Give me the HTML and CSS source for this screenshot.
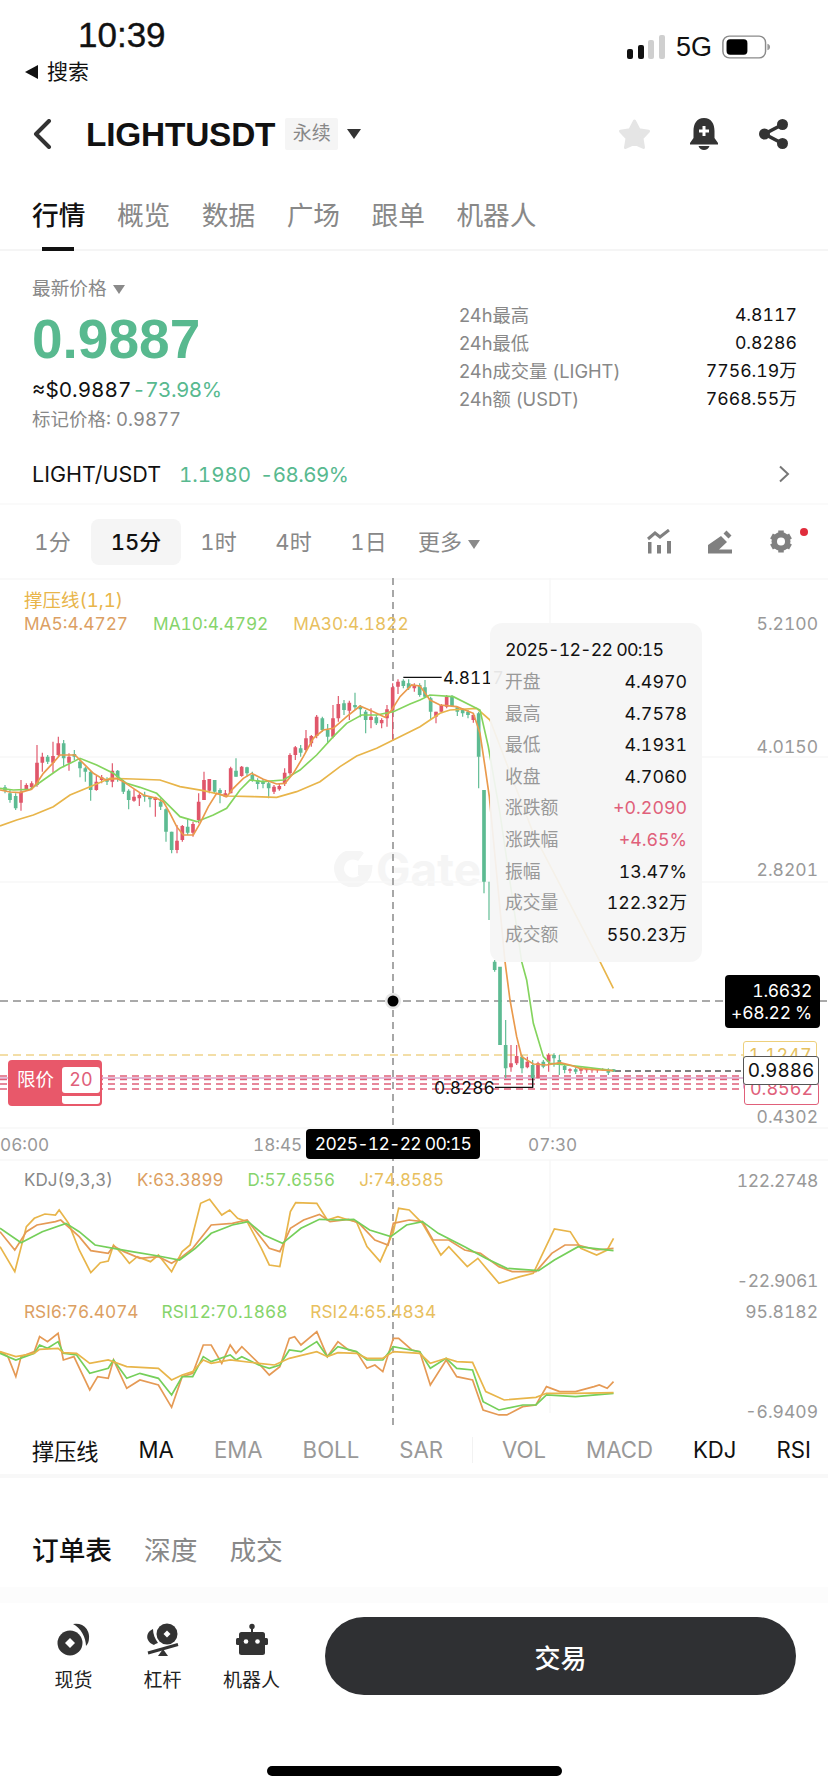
FILE: index.html
```html
<!DOCTYPE html>
<html lang="zh">
<head>
<meta charset="utf-8">
<title>LIGHTUSDT</title>
<link rel="stylesheet" href="styles.css">
</head>
<body>
<div class="app">
  <header class="status">
    <div class="status-left">
      <div class="clock">10:39</div>
      <div class="back-app"><i class="tri-left"></i>搜索</div>
    </div>
    <div class="status-right">
      <svg class="signal" viewBox="0 0 38 25"><rect x="0" y="14" width="6" height="10" rx="2" fill="#111"/><rect x="11" y="10" width="6" height="14" rx="2" fill="#111"/><rect x="21" y="5" width="6" height="19" rx="2" fill="#cfcfcf"/><rect x="32" y="0" width="6" height="24" rx="2" fill="#cfcfcf"/></svg>
      <span class="net">5G</span>
      <svg class="battery" viewBox="0 0 54 26"><rect x="1" y="1" width="47" height="24" rx="7" fill="none" stroke="#8a8a8a" stroke-width="1.6"/><rect x="5" y="4.5" width="23" height="17" rx="4" fill="#000"/><path d="M50 9.5c2 .5 3 2 3 3.5s-1 3-3 3.5z" fill="#9a9a9a"/></svg>
    </div>
  </header>

  <nav class="nav">
    <svg class="chev-back" viewBox="0 0 20 30"><path d="M17 2 4 15l13 13" fill="none" stroke="#333" stroke-width="4" stroke-linecap="round" stroke-linejoin="round"/></svg>
    <h1 class="symbol">LIGHTUSDT</h1>
    <span class="badge">永续</span>
    <i class="tri-down tri-dark"></i>
    <div class="nav-icons">
      <svg class="ic-star" viewBox="0 0 33 32"><polygon points="16.5 3 21 11.8 30.5 13.2 24 20.3 25.5 29.5 16.5 25.3 7.5 29.5 9 20.3 2.5 13.2 12 11.8" fill="#e5e5e5" stroke="#e5e5e5" stroke-width="3" stroke-linejoin="round"/></svg>
      <svg class="ic-bell" viewBox="0 0 28 32"><path d="M14 0C6.500 0 3.500 6 3.500 13v7L0 25v1.500h28V25l-3.500-5v-7C24.500 6 21.500 0 14 0z" fill="#333"/><path d="M8.500 28h11c-.8 2.600-3 4-5.500 4s-4.700-1.400-5.500-4z" fill="#333"/><path d="M12.500 8h3v3.500H19v3h-3.500V18h-3v-3.500H9v-3h3.500z" fill="#fff"/></svg>
      <svg class="ic-share" viewBox="0 0 29 30"><path d="M23.500 5.500 5.500 15l18 9.500" fill="none" stroke="#333" stroke-width="3.500"/><circle cx="23.500" cy="5.500" r="5.500" fill="#333"/><circle cx="5.500" cy="15" r="5.500" fill="#333"/><circle cx="23.500" cy="24.500" r="5.500" fill="#333"/></svg>
    </div>
  </nav>

  <div class="tabs">
    <span class="tab tab-on">行情</span><span class="tab">概览</span><span class="tab">数据</span><span class="tab">广场</span><span class="tab">跟单</span><span class="tab">机器人</span>
  </div>

  <section class="summary">
    <div class="sum-left">
      <div class="sum-label">最新价格<i class="tri-down tri-gray"></i></div>
      <div class="price">0.9887</div>
      <div class="sum-sub"><span>≈$0.9887</span><span class="up pct">-73.98%</span></div>
      <div class="sum-mark">标记价格: 0.9877</div>
    </div>
    <dl class="sum-right">
      <div class="sum-row"><dt>24h最高</dt><dd>4.8117</dd></div>
      <div class="sum-row"><dt>24h最低</dt><dd>0.8286</dd></div>
      <div class="sum-row"><dt>24h成交量 (LIGHT)</dt><dd>7756.19万</dd></div>
      <div class="sum-row"><dt>24h额 (USDT)</dt><dd>7668.55万</dd></div>
    </dl>
  </section>

  <div class="pair">
    <span class="pair-name">LIGHT/USDT</span><span class="up pair-last">1.1980</span><span class="up pct">-68.69%</span>
    <svg class="chev-right" viewBox="0 0 12 18"><path d="M2 1.500 10 9l-8 7.500" fill="none" stroke="#777" stroke-width="2"/></svg>
  </div>

  <div class="periods">
    <span class="period">1分</span><span class="period period-on">15分</span><span class="period">1时</span><span class="period">4时</span><span class="period">1日</span><span class="period period-more">更多<i class="tri-down tri-gray"></i></span>
    <div class="period-icons">
      <svg class="ic-tool" viewBox="0 0 24 25"><path d="M1 10 8 4l5 4 9-7" fill="none" stroke="#808080" stroke-width="3"/><path d="M1 13h3.500v11.500H1zM10 16h4v8.500h-4zM20 12h4v12.500h-4z" fill="#808080"/></svg>
      <svg class="ic-tool" viewBox="0 0 24 25"><path d="M13 7l6 6-9 8.500H0v-5.500zM15.500 4.500 18.500 1.500l5 5-3 3zM11 20.500h13v4H0v-4z" fill="#808080"/></svg>
      <div class="gear-wrap">
        <svg class="ic-tool" viewBox="0 0 24 24"><g stroke="#808080" stroke-width="5.500"><path d="M12 12V1M12 12v11M12 12 2.500 6.500M12 12l9.500 5.500M12 12l9.500-5.500M12 12l-9.500 5.500"/></g><circle cx="12" cy="12" r="9.500" fill="#808080"/><circle cx="12" cy="12" r="4" fill="#fff"/></svg>
        <i class="red-dot"></i>
      </div>
    </div>
  </div>

  <section class="chart">
    <div class="watermark">
      <svg class="wm-logo" viewBox="0 0 40 36"><path d="M28 6A14 14 0 1 0 34 19H25" fill="none" stroke="#f5f5f5" stroke-width="10"/></svg>
      <span>Gate</span>
    </div>

    <svg class="plot" viewBox="0 0 828 847">
      <g stroke="#f7f7f7" stroke-width="1.500" fill="none">
        <path d="M0 179H828M0 304H828M0 550H828M0 582H828M0 1H828M550 0V550M0 836H0M550 582V835"/>
      </g>
      <g fill="none">
        <path d="M393 0V847" stroke="#8a8a8a" stroke-width="1.500" stroke-dasharray="7 5"/>
        <path d="M0 423H828" stroke="#555" stroke-width="1" stroke-dasharray="8 5"/>
        <path d="M0 477H745" stroke="#f0d48a" stroke-width="1.300" stroke-dasharray="8 5"/>
        <path d="M0 500H745" stroke="#c77fb5" stroke-width="1"/>
        <path d="M0 498H745M0 501.500H745M0 506H745M0 511H745" stroke="#e0607a" stroke-width="1.500" stroke-dasharray="7 5"/>
        <path d="M615 493H745" stroke="#555" stroke-width="1.300" stroke-dasharray="6 4"/>
      </g>
      <g transform="translate(0 2) scale(.33333)" fill="none">
        <path stroke="#5dbb92" stroke-width="3.500" d="M15 615V640M30 630V668M47 640V690M143 525V552M191 480V562M223 510V540M240 535V592M256 560V605M272 572V662M321 592V615M353 570V605M370 600V642M386 628V688M434 635V665M450 648V682M482 655V690M498 685V785M515 755V820M563 715V765M644 600V640M660 625V670M708 535V590M741 560V590M757 575V605M773 595V628M789 598V625M806 605V655M902 495V530M967 410V455M983 432V490M1032 360V405M1065 338V390M1081 375V412M1097 390V460M1129 405V435M1210 298V325M1226 298V330M1259 310V350M1275 300V352M1292 350V418M1356 345V380M1372 380V408M1388 385V410M1404 390V415M1436 395V625M1452 630V940M1467 905V1020M1484 1140V1175M1517 1320V1495M1566 1425V1480M1598 1440V1520M1630 1440V1465M1662 1420V1460M1678 1425V1485M1694 1450V1480M1727 1462V1482M1825 1465V1485M1841 1468V1475"/>
        <path stroke="#5dbb92" stroke-width="11" d="M15 622V632M30 640V660M47 648V685M143 530V545M191 490V535M223 522V530M240 545V565M256 565V575M272 575V630M321 597V605M353 572V592M370 605V635M386 632V660M434 645V650M450 652V658M482 665V680M498 688V755M515 755V810M563 740V758M644 600V635M660 630V640M708 572V590M741 562V580M757 585V600M773 600V612M789 605V612M806 610V625M902 505V518M967 415V450M983 450V470M1032 370V390M1065 375V382M1081 380V388M1097 395V420M1129 412V430M1210 302V318M1226 310V325M1259 315V345M1275 322V350M1292 355V395M1356 350V378M1372 382V395M1388 390V400M1404 395V405M1436 400V530M1452 630V905M1484 1145V1170M1500 1160V1395M1517 1395V1465M1566 1430V1465M1598 1455V1495M1630 1445V1460M1662 1425V1435M1678 1440V1455M1694 1458V1470M1727 1468V1475M1825 1470V1478M1841 1468V1475"/>
        <path stroke="#e0566a" stroke-width="3.500" d="M63 600V692M79 610V632M95 604V625M111 495V620M127 518V575M159 485V578M175 470V530M207 520V572M289 588V632M305 585V610M337 550V622M402 628V665M418 640V678M466 650V710M531 735V820M547 735V785M579 725V770M596 640V730M612 575V660M628 597V640M676 630V652M692 560V640M725 558V590M822 615V642M838 610V632M854 565V618M870 520V585M886 498V540M918 450V515M934 465V500M950 405V475M999 375V475M1015 348V425M1048 362V420M1113 385V445M1145 415V445M1161 375V440M1178 310V480M1194 298V342M1243 310V335M1308 395V430M1324 372V398M1340 345V385M1420 400V428M1533 1395V1475M1550 1395V1455M1582 1430V1465M1614 1445V1495M1646 1420V1475M1710 1465V1480M1743 1458V1482M1760 1465V1478M1776 1465V1478M1792 1465V1478M1808 1465V1472"/>
        <path stroke="#e0566a" stroke-width="11" d="M63 635V668M79 615V628M95 610V622M111 548V615M127 530V548M159 528V548M175 490V525M207 530V548M289 605V630M305 592V600M337 572V605M402 650V662M418 645V655M466 652V660M531 782V810M547 738V780M579 732V758M596 665V720M612 600V660M628 597V632M676 640V650M692 565V640M725 560V588M822 620V635M838 618V628M854 578V612M870 525V580M886 502V525M918 475V510M934 468V490M950 410V468M999 415V470M1015 372V415M1048 368V392M1113 410V420M1145 420V430M1161 388V415M1178 322V390M1194 305V320M1243 315V325M1308 395V410M1324 375V395M1340 350V380M1420 405V420M1533 1450V1462M1550 1428V1450M1582 1445V1462M1614 1450V1495M1646 1425V1445M1710 1468V1472M1743 1465V1472M1760 1468V1471M1776 1468V1471M1792 1468V1471M1808 1468V1471"/>
        <polyline stroke="#e8b54a" stroke-width="5" points="0,738 50,720 100,705 160,680 210,645 270,620 330,595 400,597 480,600 540,620 610,632 680,648 760,650 830,652 890,635 960,605 1020,560 1070,528 1130,505 1180,480 1230,455 1260,440 1320,400 1350,390 1430,385 1470,420 1600,760 1800,1145 1840,1225"/>
        <polyline stroke="#84d45e" stroke-width="5" points="0,625 40,630 90,628 130,600 180,565 240,535 290,555 340,580 380,610 420,622 470,640 500,670 540,710 590,725 640,705 680,685 720,630 750,600 790,605 850,600 900,570 950,525 1000,470 1040,430 1085,405 1130,405 1180,395 1230,372 1260,360 1290,345 1360,350 1440,390 1465,500 1500,700 1565,1145 1580,1200 1600,1330 1630,1430 1650,1450 1700,1455 1760,1462 1840,1472"/>
        <polyline stroke="#ea9a4c" stroke-width="5" points="0,630 30,636 60,638 95,628 110,610 130,580 160,548 180,525 225,525 250,550 280,580 300,592 320,600 350,595 370,605 400,625 430,645 470,655 490,665 510,700 530,740 550,765 580,765 600,730 625,680 650,640 680,650 700,625 730,595 755,580 790,598 830,612 855,610 880,580 910,530 940,475 970,450 1000,445 1040,410 1080,378 1120,395 1155,412 1175,390 1200,350 1235,315 1260,318 1290,360 1320,375 1370,380 1420,400 1440,460 1455,560 1468,650 1515,1145 1530,1260 1550,1370 1565,1430 1600,1452 1640,1455 1680,1448 1710,1455 1740,1465 1800,1470 1840,1472"/>
        <path stroke="#111" stroke-width="4" d="M1210 292H1325M1598 1495V1522H1485"/>
      </g>
      <circle cx="393" cy="423" r="8" fill="#000" fill-opacity=".1"/>
      <circle cx="393" cy="423" r="5.500" fill="#000"/>
      <g transform="translate(0 582) scale(.528 .3333)" fill="none" stroke-width="1.700">
        <polyline vector-effect="non-scaling-stroke" stroke="#e8b54a" points="0,260 28,335 50,200 65,175 85,162 105,165 112,150 130,190 150,270 172,338 190,308 205,303 215,255 230,280 245,310 260,290 285,305 300,285 325,335 345,275 360,255 380,130 397,118 420,165 435,150 450,175 468,185 495,265 510,315 530,320 550,155 560,128 600,130 620,180 640,170 660,180 675,185 695,260 720,305 745,215 755,145 775,150 800,190 835,285 850,260 885,320 905,295 945,370 985,350 1010,340 1050,207 1080,215 1100,265 1130,285 1150,270 1162,235"/>
        <polyline vector-effect="non-scaling-stroke" stroke="#e59a55" points="0,215 28,270 50,215 70,195 105,185 115,180 150,230 172,272 205,280 215,258 235,275 265,295 300,290 325,310 345,290 365,265 400,195 440,190 468,180 510,265 530,275 550,205 575,180 605,163 625,185 660,178 680,190 710,240 735,255 745,190 775,180 800,185 820,240 850,240 880,270 910,280 945,320 970,335 1015,335 1045,280 1070,255 1095,255 1130,270 1162,265"/>
        <polyline vector-effect="non-scaling-stroke" stroke="#75cf5a" points="0,205 40,248 80,215 125,190 150,215 180,255 215,265 250,275 300,288 340,300 370,265 400,220 440,195 470,185 500,225 535,250 570,205 605,178 640,180 670,178 700,210 740,230 770,195 800,185 830,220 880,260 920,295 960,325 1020,332 1050,300 1095,260 1162,272"/>
        <polyline vector-effect="non-scaling-stroke" stroke="#e59a55" points="0,575 15,590 30,650 40,590 65,575 75,530 90,545 110,520 120,600 140,590 170,690 185,650 205,655 215,600 240,685 265,660 300,675 325,742 345,650 365,640 385,555 400,555 420,610 436,555 447,580 458,560 490,610 510,645 530,620 548,535 558,530 570,555 600,515 620,590 640,545 660,570 675,575 695,625 710,615 725,635 745,535 755,535 780,570 795,575 815,675 845,600 865,650 895,660 915,750 945,765 960,765 990,740 1015,735 1035,680 1060,695 1090,695 1125,680 1135,675 1150,685 1162,665"/>
        <polyline vector-effect="non-scaling-stroke" stroke="#75cf5a" points="0,580 30,600 65,580 75,555 90,565 110,545 120,580 145,585 170,640 205,625 215,600 240,655 265,640 300,655 325,705 345,650 365,650 385,590 400,605 436,585 447,600 458,590 490,615 510,625 530,615 548,570 570,575 600,545 620,590 640,560 675,575 695,600 725,600 745,560 795,575 815,625 845,595 865,625 895,630 915,725 945,750 990,735 1015,735 1035,705 1090,710 1162,700"/>
        <polyline vector-effect="non-scaling-stroke" stroke="#e8b54a" points="0,575 30,590 65,580 75,568 110,565 120,578 145,580 170,610 205,600 240,620 300,625 325,660 345,645 365,635 385,600 400,610 436,600 490,610 520,615 548,595 600,575 620,590 640,578 675,580 695,595 725,595 745,575 795,580 815,610 845,595 865,605 895,607 920,695 955,720 1015,712 1035,700 1090,700 1162,698"/>
      </g>
    </svg>

    <div class="legend legend-sr">撑压线(1,1)</div>
    <div class="legend legend-ma"><span class="c-o">MA5:4.4727</span><span class="c-g">MA10:4.4792</span><span class="c-y">MA30:4.1822</span></div>
    <div class="legend legend-kdj"><span class="c-n">KDJ(9,3,3)</span><span class="c-o">K:63.3899</span><span class="c-g">D:57.6556</span><span class="c-y">J:74.8585</span></div>
    <div class="legend legend-rsi"><span class="c-o">RSI6:76.4074</span><span class="c-g">RSI12:70.1868</span><span class="c-y">RSI24:65.4834</span></div>

    <span class="axis ax1">5.2100</span><span class="axis ax2">4.0150</span><span class="axis ax3">2.8201</span><span class="axis ax4">0.4302</span>
    <span class="axis ax5 axis-tight">122.2748</span><span class="axis ax6 axis-tight">-22.9061</span><span class="axis ax7">95.8182</span><span class="axis ax8">-6.9409</span>
    <span class="time t1">06:00</span><span class="time t2">18:45</span><span class="time t3">07:30</span>
    <span class="mark mark-hi">4.8117</span><span class="mark mark-lo">0.8286</span>

    <div class="tip">
      <div class="tip-date">2025-12-22 00:15</div>
      <div class="tip-row"><span>开盘</span><b>4.4970</b></div>
      <div class="tip-row"><span>最高</span><b>4.7578</b></div>
      <div class="tip-row"><span>最低</span><b>4.1931</b></div>
      <div class="tip-row"><span>收盘</span><b>4.7060</b></div>
      <div class="tip-row"><span>涨跌额</span><b class="red">+0.2090</b></div>
      <div class="tip-row"><span>涨跌幅</span><b class="red">+4.65%</b></div>
      <div class="tip-row"><span>振幅</span><b>13.47%</b></div>
      <div class="tip-row"><span>成交量</span><b>122.32万</b></div>
      <div class="tip-row"><span>成交额</span><b>550.23万</b></div>
    </div>

    <div class="cross-price"><span>1.6632</span><span>+68.22 %</span></div>
    <div class="cross-time">2025-12-22 00:15</div>

    <div class="tag tag-y">1.1247</div>
    <div class="tag tag-p">0.9010</div>
    <div class="tag tag-r">0.8562</div>
    <div class="tag tag-now">0.9886</div>

    <div class="limit">
      <span class="limit-name">限价</span>
      <span class="limit-qty">20</span>
      <span class="limit-under"></span>
    </div>
  </section>

  <div class="inds">
    <span class="ind">撑压线</span><span class="ind">MA</span><span class="ind off">EMA</span><span class="ind off">BOLL</span><span class="ind off">SAR</span><i class="ind-sep"></i><span class="ind off">VOL</span><span class="ind off">MACD</span><span class="ind">KDJ</span><span class="ind">RSI</span>
  </div>

  <div class="book-tabs">
    <span class="book-tab book-on">订单表</span><span class="book-tab">深度</span><span class="book-tab">成交</span>
  </div>

  <footer class="bottom">
    <div class="shortcut">
      <svg class="sc-icon" viewBox="0 0 34 34"><path d="M16 1a13 13 0 0 1 16 14c0 3-1 6-3 8 0-8-5-18-13-22z" fill="#333"/><circle cx="13" cy="20" r="12.500" fill="#333"/><path d="M13 15l5 5-5 5-5-5z" fill="#fff"/></svg>
      <span>现货</span>
    </div>
    <div class="shortcut">
      <svg class="sc-icon" viewBox="0 0 34 34"><circle cx="21" cy="11" r="10.500" fill="#333"/><path d="M21 7.500l3.500 3.500-3.500 3.500-3.500-3.500z" fill="#fff"/><path d="M7 6c-5 2-7 7-5 11 1 2 3 4 6 5 1-1 3-2 4-2-3-4-5-9-5-14z" fill="#333"/><path d="M2 30 32 21.500" stroke="#333" stroke-width="3"/><path d="M17 26l5 7H12z" fill="#333"/></svg>
      <span>杠杆</span>
    </div>
    <div class="shortcut">
      <svg class="sc-icon" viewBox="0 0 34 34"><circle cx="17" cy="3.500" r="2.700" fill="#333"/><rect x="16" y="5" width="2" height="5" fill="#333"/><rect x="4" y="9" width="26" height="23" rx="2.500" fill="#333"/><rect x="1" y="15" width="32" height="7" rx="1.500" fill="#333"/><circle cx="11" cy="18.500" r="2.300" fill="#fff"/><circle cx="22.500" cy="18.500" r="2.300" fill="#fff"/></svg>
      <span>机器人</span>
    </div>
    <button class="trade">交易</button>
  </footer>

  <div class="home"></div>
</div>
</body>
</html>
```

FILE: styles.css
```css
* { box-sizing: border-box; margin: 0; padding: 0; }
html, body { background: #fff; }
body {
  width: 828px;
  height: 1792px;
  overflow: hidden;
  color: #111;
  font-family: Inter, "Noto Sans CJK SC", sans-serif;
  font-variant-numeric: tabular-nums;
}
.app { width: 828px; height: 1792px; display: flex; flex-direction: column; }
i { display: inline-block; font-style: normal; }

.up { color: #58b98f; }
.red { color: #e0607a; }
.pct { letter-spacing: -.55px; }

.tri-left { width: 0; height: 0; border-style: solid; border-width: 7px 13px 7px 0; border-color: transparent #111 transparent transparent; margin-right: 9px; }
.tri-down { width: 0; height: 0; border-style: solid; border-width: 0 7px; border-left-color: transparent; border-right-color: transparent; }
.tri-dark { border-top: 10px solid #333; margin-left: 9px; }
.tri-gray { border-left-width: 6px; border-right-width: 6px; border-top: 9px solid #8a8a8a; margin-left: 6px; vertical-align: 1px; }

/* status bar */
.status { height: 100px; display: flex; justify-content: space-between; padding-left: 25px; padding-right: 57px; flex: none; }
.status-left { padding-top: 14px; }
.clock { font-family: "Liberation Sans", sans-serif; font-size: 35px; line-height: 42px; font-weight: 400; margin-left: 53px; -webkit-text-stroke: .4px #111; }
.back-app { display: flex; align-items: center; font-size: 21px; line-height: 28px; margin-top: 2px; }
.status-right { display: flex; align-items: center; height: 94px; }
.signal { width: 38px; height: 25px; margin-right: 11px; }
.net { font-family: "Liberation Sans", sans-serif; font-size: 27px; margin-right: 10px; }
.battery { width: 49px; height: 26px; }

/* nav */
.nav { height: 68px; display: flex; align-items: center; padding: 0 40px 0 32px; flex: none; }
.chev-back { width: 20px; height: 30px; }
.symbol { font-family: "Liberation Sans", sans-serif; font-size: 33.400px; line-height: 38px; font-weight: 700; margin-left: 34px; margin-top: 2px; letter-spacing: -.2px; }
.badge { margin-left: 10px; width: 53px; height: 32px; background: #f5f5f5; color: #888; font-size: 19px; line-height: 32px; text-align: center; border-radius: 2px; }
.nav-icons { margin-left: auto; display: flex; align-items: center; }
.ic-star { width: 33px; height: 32px; }
.ic-bell { width: 28px; height: 32px; margin-left: 39px; }
.ic-share { width: 29px; height: 30px; margin-left: 41px; }

/* tabs */
.tabs { height: 83px; display: flex; gap: 31.500px; padding: 30px 32px 0; border-bottom: 2px solid #f5f5f5; flex: none; }
.tab { position: relative; font-size: 26.700px; line-height: 34px; color: #888; height: 34px; }
.tab-on { color: #111; font-weight: 500; }
.tab-on::after { content: ""; position: absolute; left: 10px; right: 11px; top: 49px; height: 4px; background: #111; }

/* summary */
.summary { height: 194px; display: flex; justify-content: space-between; padding: 26px 31px 0 32px; flex: none; }
.sum-label { font-size: 18.700px; line-height: 24px; color: #888; }
.price { font-family: "Liberation Sans", sans-serif; font-size: 55px; line-height: 62px; font-weight: 700; color: #58b98f; margin-top: 7px; }
.sum-sub { font-size: 20.700px; line-height: 30px; margin-top: 5px; display: flex; gap: 1px; }
.sum-mark { font-size: 18.500px; line-height: 26px; color: #888; margin-top: 1px; }
.sum-right { width: 338px; padding-top: 24px; }
.sum-row { display: flex; justify-content: space-between; height: 28px; line-height: 28px; font-size: 18.300px; }
.sum-row dt { color: #888; font-variant-numeric: normal; }
.sum-row dd { color: #111; font-size: 17.700px; }

/* pair */
.pair { height: 60px; display: flex; align-items: center; padding: 0 38px 0 32px; font-size: 20.500px; border-bottom: 2px solid #fafafa; flex: none; }
.pair-name { margin-right: 18px; font-size: 21.500px; }
.pair-last { margin-right: 9px; }
.chev-right { width: 12px; height: 18px; margin-left: auto; }

/* periods */
.periods { height: 73px; display: flex; align-items: center; padding-left: 15px; padding-right: 35px; flex: none; }
.period { font-size: 22px; color: #888; width: 75px; text-align: center; height: 46px; line-height: 46px; border-radius: 8px; flex: none; }
.period-on { width: 90px; background: #f5f5f5; color: #111; font-weight: 500; margin-left: 1px; }
.period-more { width: auto; margin-left: 12px; white-space: nowrap; }
.period-icons { margin-left: auto; display: flex; align-items: center; gap: 37px; }
.ic-tool { width: 24px; height: 25px; display: block; }
.gear-wrap { position: relative; }
.red-dot { position: absolute; right: -15px; top: -1px; width: 8px; height: 8px; border-radius: 50%; background: #e02d3c; }

/* chart: a free canvas */
.chart { position: relative; height: 847px; flex: none; overflow: hidden; }
.plot { position: absolute; left: 0; top: 0; width: 828px; height: 847px; }
.watermark { position: absolute; left: 333px; top: 271px; display: flex; align-items: center; gap: 3px; font-size: 46px; line-height: 40px; font-weight: 700; color: #f5f5f5; }
.wm-logo { width: 40px; height: 36px; }

.legend { position: absolute; left: 24px; font-size: 17.300px; line-height: 22px; display: flex; white-space: nowrap; }
.legend-sr { top: 11px; color: #e8b54a; font-size: 18.500px; }
.legend-ma { top: 35px; gap: 25px; }
.legend-kdj { top: 591px; gap: 24px; font-size: 17px; }
.legend-rsi { top: 723px; gap: 23px; font-size: 17.300px; }
.c-o { color: #dc9f63; }
.c-g { color: #86d46b; }
.c-y { color: #e8c05e; }
.c-n { color: #888; }

.axis { position: absolute; right: 10px; font-size: 17.500px; line-height: 22px; color: #999; }
.axis-tight { letter-spacing: -.35px; }
.ax1 { top: 35px; } .ax2 { top: 158px; } .ax3 { top: 281px; } .ax4 { top: 528px; }
.ax5 { top: 592px; } .ax6 { top: 692px; } .ax7 { top: 723px; } .ax8 { top: 823px; }

.time { position: absolute; top: 556px; font-size: 17.200px; line-height: 22px; color: #999; }
.t1 { left: 0; } .t2 { left: 253px; } .t3 { left: 528px; }

.mark { position: absolute; font-size: 17.300px; line-height: 22px; color: #111; }
.mark-hi { left: 443px; top: 89px; }
.mark-lo { left: 434px; top: 499px; }

.tip { position: absolute; left: 490px; top: 45px; width: 212px; height: 339px; padding: 11px 15px 0 15px; background: rgba(245,245,245,.93); border-radius: 12px; font-size: 17.800px; }
.tip-date { line-height: 32px; color: #111; letter-spacing: -.8px; white-space: nowrap; }
.tip-row { display: flex; justify-content: space-between; height: 31.600px; line-height: 31.600px; }
.tip-row span { color: #999; }
.tip-row b { font-weight: 400; color: #111; }
.tip-row b.red { color: #e0607a; }

.cross-price { position: absolute; left: 725px; top: 397px; width: 95px; height: 53px; background: #000; color: #fff; border-radius: 4px; font-size: 17.500px; line-height: 22px; padding: 5px 8px 0 0; display: flex; flex-direction: column; align-items: flex-end; white-space: nowrap; letter-spacing: -.3px; }
.cross-time { position: absolute; left: 306px; top: 551px; width: 174px; height: 30px; background: #000; color: #fff; border-radius: 4px; font-size: 17.500px; line-height: 30px; text-align: center; white-space: nowrap; letter-spacing: -.75px; }

.tag { position: absolute; background: #fff; border-radius: 3px; text-align: center; font-size: 18px; white-space: nowrap; overflow: hidden; }
.tag-y { left: 743px; top: 463px; width: 74px; height: 30px; border: 1.300px solid #edd07c; color: #e6c15f; line-height: 28px; }
.tag-p { left: 743px; top: 490px; width: 76px; height: 22px; border: 1px solid #d9a3d0; color: #ccc; line-height: 18px; }
.tag-r { left: 744px; top: 505px; width: 75px; height: 22px; border: 1.300px solid #e0607a; color: #e0607a; line-height: 10px; }
.tag-now { left: 743px; top: 478px; width: 76px; height: 29px; border: 1px solid #555; color: #111; font-size: 19px; line-height: 27px; }

.limit { position: absolute; left: 8px; top: 482px; width: 94px; height: 46px; background: #e8586a; border-radius: 4px; }
.limit-name { position: absolute; left: 9px; top: 4px; color: #fff; font-size: 18.500px; line-height: 30px; }
.limit-qty { position: absolute; left: 54px; top: 7px; width: 38px; height: 26px; background: #fff; color: #e0607a; border-radius: 3px; text-align: center; font-size: 18px; line-height: 26px; }
.limit-under { position: absolute; left: 54px; top: 36px; width: 38px; height: 8px; background: #fff; border-radius: 0 0 3px 3px; }

/* indicators */
.inds { height: 53px; display: flex; align-items: center; gap: 40px; padding-left: 32px; border-bottom: 4px solid #f8f8f8; flex: none; white-space: nowrap; }
.ind { font-size: 22.200px; color: #111; }
.ind.off { color: #999; }
.ind-sep { width: 1px; height: 26px; background: #f2f2f2; margin: 0 -11px; }

/* order book tabs */
.book-tabs { height: 125px; display: flex; gap: 32px; padding: 54px 32px 0; border-bottom: 16px solid #fcfcfc; flex: none; }
.book-tab { font-size: 26.700px; line-height: 36px; color: #888; }
.book-on { color: #111; font-weight: 500; }

/* bottom bar */
.bottom { display: flex; padding: 14px 32px 0 29px; height: 163px; flex: none; }
.shortcut { width: 89px; height: 78px; display: flex; flex-direction: column; align-items: center; font-size: 19px; color: #222; }
.sc-icon { width: 34px; height: 34px; margin-top: 6px; }
.shortcut span { margin-top: 11px; line-height: 26px; }
.trade { margin-left: 29px; width: 471px; height: 78px; border: none; border-radius: 39px; background: #2f3033; color: #fff; font-family: inherit; font-size: 26px; font-weight: 500; }

.home { align-self: center; width: 295px; height: 10px; border-radius: 5px; background: #000; flex: none; }
```
